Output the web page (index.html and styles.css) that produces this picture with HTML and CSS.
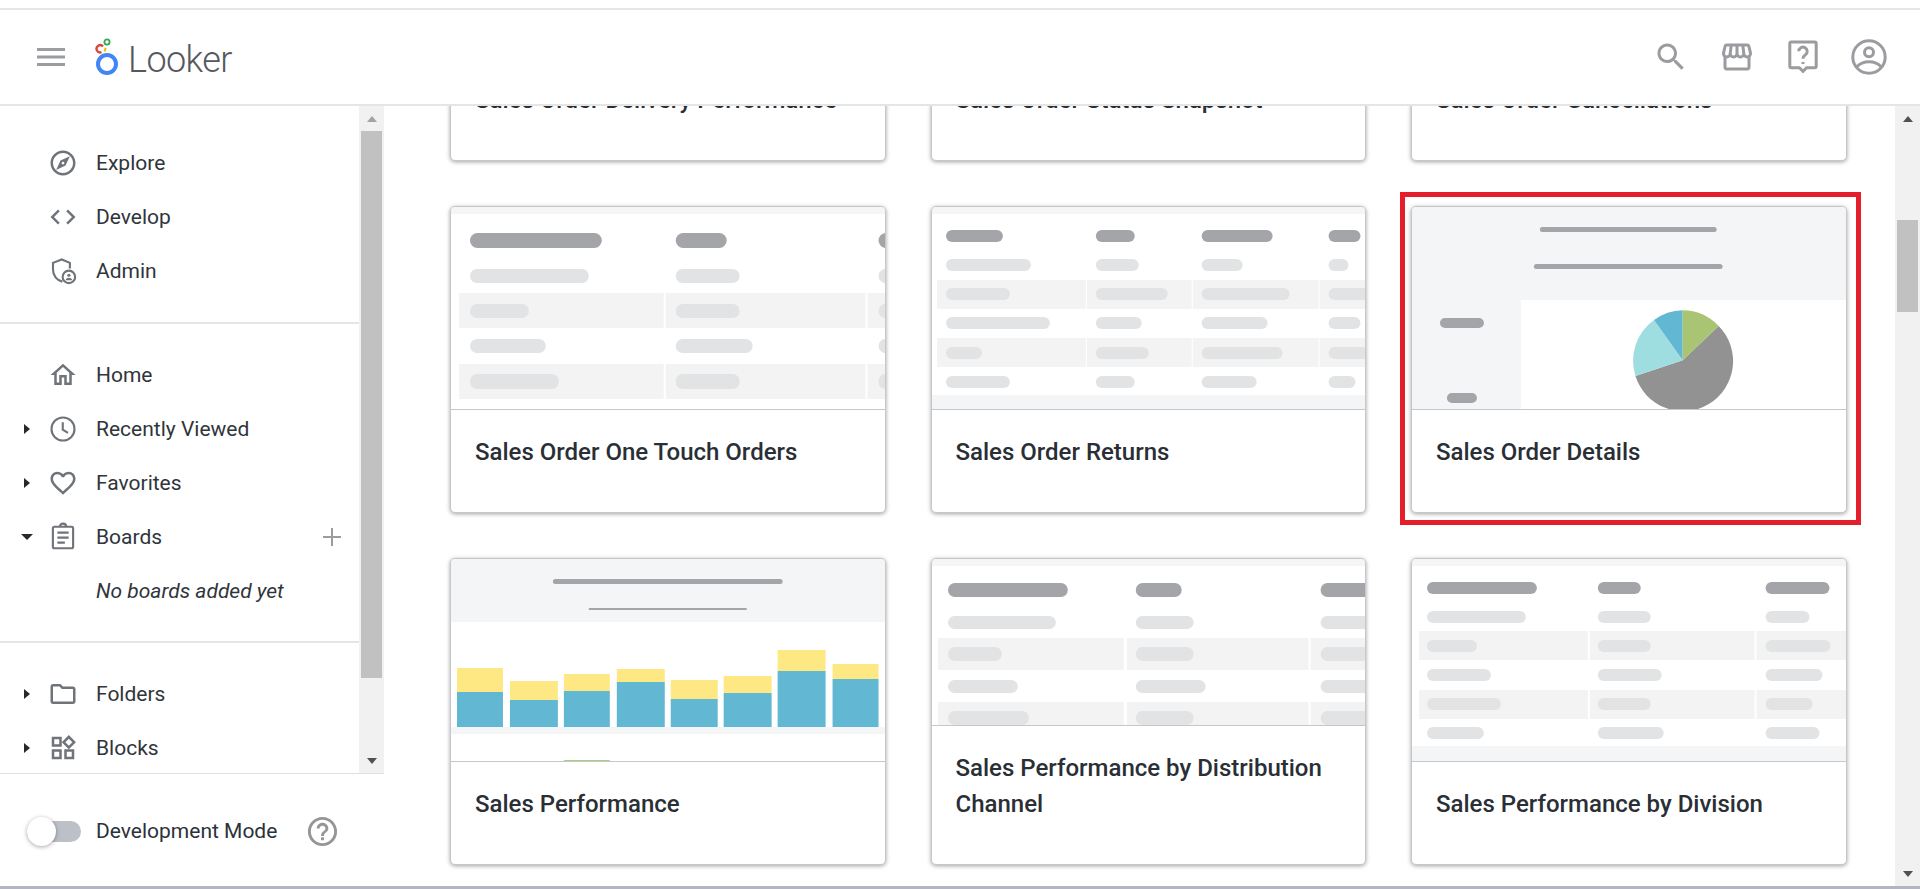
FILE: index.html
```html
<!DOCTYPE html>
<html lang="en">
<head>
<meta charset="utf-8">
<title>Looker</title>
<link rel="stylesheet" href="styles.css">
</head>
<body>
<div class="topstrip"></div>
<header class="header">
  <svg class="burger" viewBox="0 0 28 18"><path d="M0 1.5h28M0 9h28M0 16.5h28"/></svg>
  <div class="logo">
    <svg class="logo-mark" viewBox="0 0 24 38">
      <circle class="lm-blue" cx="12" cy="26" r="9"/>
      <path class="lm-red" d="M8 8.6a3.6 3.6 0 1 0 -1.5 5.6"/>
      <circle class="lm-green" cx="12" cy="4" r="2.6"/>
      <path class="lm-yellow" d="M9.6 13.5l1.1-3.6"/>
    </svg>
    <span class="logo-text">Looker</span>
  </div>
  <div class="header-icons">
    <svg class="hi" viewBox="0 0 24 24"><path d="M15.5 14h-.79l-.28-.27C15.41 12.59 16 11.11 16 9.5 16 5.91 13.09 3 9.5 3S3 5.91 3 9.5 5.91 16 9.5 16c1.61 0 3.09-.59 4.23-1.57l.27.28v.79l5 4.99L20.49 19l-4.99-5zm-6 0C7.01 14 5 11.99 5 9.5S7.01 5 9.5 5 14 7.01 14 9.5 11.99 14 9.5 14z"/></svg>
    <svg class="hi" viewBox="0 0 24 24"><path d="M21.9 8.89l-1.05-4.37c-.22-.9-1-1.52-1.91-1.52H5.05c-.9 0-1.69.63-1.9 1.52L2.1 8.89c-.24 1.02-.02 2.06.62 2.88.08.11.19.19.28.29V19c0 1.1.9 2 2 2h14c1.1 0 2-.9 2-2v-6.94c.09-.09.2-.18.28-.28.64-.82.87-1.87.62-2.89zm-2.99-3.9l1.05 4.37c.1.42.01.84-.25 1.17-.14.18-.44.47-.94.47-.61 0-1.14-.49-1.21-1.14L16.98 5l1.93-.01zM13 5h1.96l.54 4.52c.05.39-.07.78-.33 1.07-.22.26-.54.41-.95.41-.67 0-1.22-.59-1.22-1.31V5zM8.49 9.52L9.04 5H11v4.69c0 .72-.55 1.31-1.29 1.31-.34 0-.65-.15-.89-.41-.25-.29-.37-.68-.33-1.07zm-4.45-.16L5.05 5h1.97l-.58 4.86c-.08.65-.6 1.14-1.21 1.14-.49 0-.8-.29-.93-.47-.27-.32-.36-.75-.26-1.17zM5 19v-6.03c.08.01.15.03.23.03.87 0 1.66-.36 2.24-.95.6.6 1.4.95 2.31.95.87 0 1.65-.36 2.23-.93.59.57 1.39.93 2.29.93.84 0 1.64-.35 2.24-.95.58.59 1.37.95 2.24.95.08 0 .15-.02.23-.03V19H5z"/></svg>
    <svg class="hi hi-stroke" viewBox="0 0 24 24"><path d="M4.2 2h15.6a1 1 0 0 1 1 1v15.2a1 1 0 0 1-1 1h-5.4l-2.4 2.4-2.4-2.4H4.2a1 1 0 0 1-1-1V3a1 1 0 0 1 1-1z"/><path d="M9.2 8.2a2.8 2.8 0 1 1 4.4 2.3c-1 .7-1.6 1.3-1.6 2.6"/><path d="M12 15.3v1.4"/></svg>
    <svg class="hi hi-stroke" viewBox="0 0 24 24"><circle cx="12" cy="12" r="10.8"/><circle cx="12" cy="8.8" r="3"/><path d="M3.8 18.6c1.8-2 4.9-3.4 8.2-3.4s6.4 1.4 8.2 3.4"/></svg>
  </div>
</header>

<div class="app">
  <aside class="sidebar">
    <div class="side-scroll">
      <nav class="nav">
        <div class="nav-group">
          <div class="item"><span class="caret-slot"></span><svg class="ic" viewBox="0 0 24 24"><path d="M12 2C6.48 2 2 6.48 2 12s4.48 10 10 10 10-4.48 10-10S17.52 2 12 2zm0 18c-4.41 0-8-3.59-8-8s3.59-8 8-8 8 3.59 8 8-3.59 8-8 8zm-5.5-2.5l7.51-3.49L17.5 6.5 9.99 9.99 6.5 17.5zm5.5-6.6c.61 0 1.1.49 1.1 1.1s-.49 1.1-1.1 1.1-1.1-.49-1.1-1.1.49-1.1 1.1-1.1z"/></svg><span>Explore</span></div>
          <div class="item"><span class="caret-slot"></span><svg class="ic" viewBox="0 0 24 24"><path d="M9.4 16.6L4.8 12l4.6-4.6L8 6l-6 6 6 6 1.4-1.4zm5.2 0l4.6-4.6-4.6-4.6L16 6l6 6-6 6-1.4-1.4z"/></svg><span>Develop</span></div>
          <div class="item"><span class="caret-slot"></span><svg class="ic ic-stroke" viewBox="0 0 24 24"><path d="M11.5 20.5C7 19.5 4 15.5 4 11V5.5L11 2.8l6.5 2.7v4.5"/><circle cx="16.7" cy="16.7" r="5"/><circle class="ic-dot" cx="16.7" cy="15.4" r="1.3"/><path class="ic-dot" d="M14 19.3c.5-1.3 1.5-1.9 2.7-1.9s2.2.6 2.7 1.9z"/></svg><span>Admin</span></div>
        </div>
        <div class="nav-group">
          <div class="item"><span class="caret-slot"></span><svg class="ic" viewBox="0 0 24 24"><path d="M12 5.69l5 4.5V18h-2v-6H9v6H7v-7.81l5-4.5M12 3L2 12h3v8h6v-6h2v6h6v-8h3L12 3z"/></svg><span>Home</span></div>
          <div class="item"><span class="caret-slot"><i class="caret-r"></i></span><svg class="ic ic-stroke" viewBox="0 0 24 24"><circle cx="12" cy="12" r="9.2"/><path d="M11.8 6.5v6l4.2 2.6"/></svg><span>Recently Viewed</span></div>
          <div class="item"><span class="caret-slot"><i class="caret-r"></i></span><svg class="ic" viewBox="0 0 24 24"><path d="M16.5 3c-1.74 0-3.41.81-4.5 2.09C10.91 3.81 9.24 3 7.5 3 4.42 3 2 5.42 2 8.5c0 3.78 3.4 6.86 8.55 11.54L12 21.35l1.45-1.32C18.6 15.36 22 12.28 22 8.5 22 5.42 19.58 3 16.5 3zm-4.4 15.55l-.1.1-.1-.1C7.14 14.24 4 11.39 4 8.5 4 6.5 5.5 5 7.5 5c1.54 0 3.04.99 3.57 2.36h1.87C13.46 5.99 14.96 5 16.5 5c2 0 3.5 1.5 3.5 3.5 0 2.89-3.14 5.74-7.9 10.05z"/></svg><span>Favorites</span></div>
          <div class="item"><span class="caret-slot"><i class="caret-d"></i></span><svg class="ic ic-stroke" viewBox="0 0 24 24"><rect x="3.9" y="3.8" width="16.2" height="17.2" rx="1.2"/><path d="M9.5 3.8c0-1.5 1-2.5 2.5-2.5s2.5 1 2.5 2.5"/><path d="M7.5 8.5h9M7.5 12.5h9M7.5 16.5h6"/></svg><span>Boards</span><svg class="plus" viewBox="0 0 18 18"><path d="M9 0v18M0 9h18"/></svg></div>
          <div class="item item-empty">No boards added yet</div>
        </div>
        <div class="nav-group nav-group-last">
          <div class="item"><span class="caret-slot"><i class="caret-r"></i></span><svg class="ic" viewBox="0 0 24 24"><path d="M20 6h-8l-2-2H4c-1.1 0-1.99.9-1.99 2L2 18c0 1.1.9 2 2 2h16c1.1 0 2-.9 2-2V8c0-1.1-.9-2-2-2zm0 12H4V6h5.17l2 2H20v10z"/></svg><span>Folders</span></div>
          <div class="item"><span class="caret-slot"><i class="caret-r"></i></span><svg class="ic" viewBox="0 0 24 24"><path d="M16.66 4.52l2.83 2.83-2.83 2.83-2.83-2.83 2.83-2.83M9 5v4H5V5h4m10 10v4h-4v-4h4M9 15v4H5v-4h4m7.66-13.31L11 7.34 16.66 13l5.66-5.66-5.66-5.65zM11 3H3v8h8V3zm10 10h-8v8h8v-8zm-10 0H3v8h8v-8z"/></svg><span>Blocks</span></div>
        </div>
      </nav>
      <div class="sb">
        <span class="sb-btn"><i class="arrow-up arrow-muted"></i></span>
        <div class="sb-thumb sb-thumb-side"></div>
        <span class="sb-btn sb-btn-end"><i class="arrow-down"></i></span>
      </div>
    </div>
    <div class="side-foot">
      <div class="toggle"><span class="knob"></span></div>
      <span class="foot-label">Development Mode</span>
      <svg class="foot-help" viewBox="0 0 24 24"><path d="M11 18h2v-2h-2v2zm1-16C6.48 2 2 6.48 2 12s4.48 10 10 10 10-4.48 10-10S17.52 2 12 2zm0 18c-4.41 0-8-3.59-8-8s3.59-8 8-8 8 3.59 8 8-3.59 8-8 8zm0-14c-2.21 0-4 1.79-4 4h2c0-1.1.9-2 2-2s2 .9 2 2c0 2-3 1.75-3 5h2c0-2.25 3-2.5 3-5 0-2.21-1.79-4-4-4z"/></svg>
    </div>
  </aside>

  <main class="main">
    <div class="grid">
      <article class="card"><div class="thumb"></div><h3 class="title">Sales Order Delivery Performance</h3></article>
      <article class="card"><div class="thumb"></div><h3 class="title">Sales Order Status Snapshot</h3></article>
      <article class="card"><div class="thumb"></div><h3 class="title">Sales Order Cancellations</h3></article>

      <article class="card">
        <div class="thumb">
          <svg class="sk" viewBox="0 1 434 202" preserveAspectRatio="none">
            <rect class="band" x="0" y="0" width="435" height="8"/>
            <rect class="band2" x="8" y="87" width="205" height="35"/><rect class="band2" x="215" y="87" width="200" height="35"/><rect class="band2" x="417" y="87" width="18" height="35"/>
            <rect class="band2" x="8" y="158" width="205" height="35"/><rect class="band2" x="215" y="158" width="200" height="35"/><rect class="band2" x="417" y="158" width="18" height="35"/>
            <rect class="ph" x="19" y="27" width="132" height="15" rx="7.5"/><rect class="ph" x="225" y="27" width="51" height="15" rx="7.5"/><rect class="ph" x="428" y="27" width="50" height="15" rx="7.5"/>
            <rect class="pl" x="19" y="63" width="119" height="14" rx="7"/><rect class="pl" x="225" y="63" width="64" height="14" rx="7"/><rect class="pl" x="428" y="63" width="50" height="14" rx="7"/>
            <rect class="pl" x="19" y="98" width="59" height="14" rx="7"/><rect class="pl" x="225" y="98" width="64" height="14" rx="7"/><rect class="pl" x="428" y="98" width="50" height="14" rx="7"/>
            <rect class="pl" x="19" y="133" width="76" height="14" rx="7"/><rect class="pl" x="225" y="133" width="77" height="14" rx="7"/><rect class="pl" x="428" y="133" width="50" height="14" rx="7"/>
            <rect class="pl" x="19" y="168" width="89" height="15" rx="7"/><rect class="pl" x="225" y="168" width="64" height="15" rx="7"/><rect class="pl" x="428" y="168" width="50" height="15" rx="7"/>
          </svg>
        </div>
        <h3 class="title">Sales Order One Touch Orders</h3>
      </article>

      <article class="card">
        <div class="thumb">
          <svg class="sk" viewBox="0 1 434 202" preserveAspectRatio="none">
            <rect class="band" x="0" y="0" width="435" height="8"/><rect class="band" x="0" y="189" width="435" height="14"/>
            <rect class="band2" x="5" y="74" width="149" height="29"/><rect class="band2" x="155" y="74" width="105" height="29"/><rect class="band2" x="261" y="74" width="126" height="29"/><rect class="band2" x="388" y="74" width="47" height="29"/>
            <rect class="band2" x="5" y="132" width="149" height="29"/><rect class="band2" x="155" y="132" width="105" height="29"/><rect class="band2" x="261" y="132" width="126" height="29"/><rect class="band2" x="388" y="132" width="47" height="29"/>
            <rect class="ph" x="14" y="24" width="57" height="12" rx="6"/><rect class="ph" x="164" y="24" width="39" height="12" rx="6"/><rect class="ph" x="270" y="24" width="71" height="12" rx="6"/><rect class="ph" x="397" y="24" width="32" height="12" rx="6"/>
            <rect class="pl" x="14" y="53" width="85" height="12" rx="6"/><rect class="pl" x="164" y="53" width="43" height="12" rx="6"/><rect class="pl" x="270" y="53" width="41" height="12" rx="6"/><rect class="pl" x="397" y="53" width="20" height="12" rx="6"/>
            <rect class="pl" x="14" y="82" width="64" height="12" rx="6"/><rect class="pl" x="164" y="82" width="72" height="12" rx="6"/><rect class="pl" x="270" y="82" width="88" height="12" rx="6"/><rect class="pl" x="397" y="82" width="60" height="12" rx="6"/>
            <rect class="pl" x="14" y="111" width="104" height="12" rx="6"/><rect class="pl" x="164" y="111" width="46" height="12" rx="6"/><rect class="pl" x="270" y="111" width="66" height="12" rx="6"/><rect class="pl" x="397" y="111" width="32" height="12" rx="6"/>
            <rect class="pl" x="14" y="141" width="36" height="12" rx="6"/><rect class="pl" x="164" y="141" width="53" height="12" rx="6"/><rect class="pl" x="270" y="141" width="81" height="12" rx="6"/><rect class="pl" x="397" y="141" width="60" height="12" rx="6"/>
            <rect class="pl" x="14" y="170" width="64" height="12" rx="6"/><rect class="pl" x="164" y="170" width="39" height="12" rx="6"/><rect class="pl" x="270" y="170" width="55" height="12" rx="6"/><rect class="pl" x="397" y="170" width="27" height="12" rx="6"/>
          </svg>
        </div>
        <h3 class="title">Sales Order Returns</h3>
      </article>

      <article class="card">
        <div class="thumb">
          <svg class="sk" viewBox="0 1 434 202" preserveAspectRatio="none">
            <rect class="band" x="0" y="0" width="435" height="203"/>
            <rect class="ph" x="128" y="21" width="177" height="5" rx="2.5"/>
            <rect class="ph" x="122" y="58" width="189" height="5" rx="2.5"/>
            <rect class="white" x="109" y="94" width="326" height="109"/>
            <rect class="ph" x="28" y="112" width="44" height="10" rx="5"/>
            <rect class="ph" x="35" y="187" width="30" height="10" rx="5"/>
            <path class="pie-gray" d="M271 154.3L307 120A50 50 0 1 1 223.7 170z"/>
            <path class="pie-teal" d="M271 154.3L223.7 170A50 50 0 0 1 242.3 114z"/>
            <path class="pie-blue" d="M271 154.3L242.3 114A50 50 0 0 1 271 104.3z"/>
            <path class="pie-green" d="M271 154.3V104.3A50 50 0 0 1 307 120z"/>
          </svg>
        </div>
        <h3 class="title">Sales Order Details</h3>
        <div class="frame"></div>
      </article>

      <article class="card">
        <div class="thumb">
          <svg class="sk" viewBox="0 1 434 202" preserveAspectRatio="none">
            <rect class="band" x="0" y="0" width="435" height="64"/><rect class="band" x="0" y="169" width="435" height="7"/>
            <rect class="ph" x="102" y="21" width="230" height="5" rx="2.5"/>
            <rect class="ph" x="138" y="50" width="158" height="2"/>
            <rect class="yl" x="6" y="110" width="46" height="24"/><rect class="bl" x="6" y="134" width="46" height="35"/>
            <rect class="yl" x="59" y="123" width="48" height="19"/><rect class="bl" x="59" y="142" width="48" height="27"/>
            <rect class="yl" x="113" y="116" width="46" height="17"/><rect class="bl" x="113" y="133" width="46" height="36"/>
            <rect class="yl" x="166" y="111" width="48" height="13"/><rect class="bl" x="166" y="124" width="48" height="45"/>
            <rect class="yl" x="220" y="122" width="47" height="19"/><rect class="bl" x="220" y="141" width="47" height="28"/>
            <rect class="yl" x="273" y="118" width="48" height="17"/><rect class="bl" x="273" y="135" width="48" height="34"/>
            <rect class="yl" x="327" y="92" width="48" height="21"/><rect class="bl" x="327" y="113" width="48" height="56"/>
            <rect class="yl" x="382" y="106" width="46" height="15"/><rect class="bl" x="382" y="121" width="46" height="48"/>
            <rect class="gr" x="113" y="202" width="46" height="1"/>
          </svg>
        </div>
        <h3 class="title">Sales Performance</h3>
      </article>

      <article class="card">
        <div class="thumb thumb-short">
          <svg class="sk sk-short" viewBox="0 1 434 166" preserveAspectRatio="none">
            <rect class="band" x="0" y="0" width="435" height="8"/>
            <rect class="band2" x="6" y="80" width="186" height="32"/><rect class="band2" x="195" y="80" width="182" height="32"/><rect class="band2" x="379" y="80" width="56" height="32"/>
            <rect class="band2" x="6" y="144" width="186" height="23"/><rect class="band2" x="195" y="144" width="182" height="23"/><rect class="band2" x="379" y="144" width="56" height="23"/>
            <rect class="ph" x="16" y="25" width="120" height="14" rx="7"/><rect class="ph" x="204" y="25" width="46" height="14" rx="7"/><rect class="ph" x="389" y="25" width="70" height="14" rx="7"/>
            <rect class="pl" x="16" y="58" width="108" height="13" rx="6.5"/><rect class="pl" x="204" y="58" width="58" height="13" rx="6.5"/><rect class="pl" x="389" y="58" width="70" height="13" rx="6.5"/>
            <rect class="pl" x="16" y="89" width="54" height="14" rx="7"/><rect class="pl" x="204" y="89" width="58" height="14" rx="7"/><rect class="pl" x="389" y="89" width="70" height="14" rx="7"/>
            <rect class="pl" x="16" y="122" width="70" height="13" rx="6.5"/><rect class="pl" x="204" y="122" width="70" height="13" rx="6.5"/><rect class="pl" x="389" y="122" width="70" height="13" rx="6.5"/>
            <rect class="pl" x="16" y="153" width="81" height="14" rx="7"/><rect class="pl" x="204" y="153" width="58" height="14" rx="7"/><rect class="pl" x="389" y="153" width="70" height="14" rx="7"/>
          </svg>
        </div>
        <h3 class="title">Sales Performance by Distribution Channel</h3>
      </article>

      <article class="card">
        <div class="thumb">
          <svg class="sk" viewBox="0 1 434 202" preserveAspectRatio="none">
            <rect class="band" x="0" y="0" width="435" height="8"/><rect class="band" x="0" y="188" width="435" height="15"/>
            <rect class="band2" x="7" y="73" width="169" height="29"/><rect class="band2" x="178" y="73" width="165" height="29"/><rect class="band2" x="345" y="73" width="90" height="29"/>
            <rect class="band2" x="7" y="132" width="169" height="29"/><rect class="band2" x="178" y="132" width="165" height="29"/><rect class="band2" x="345" y="132" width="90" height="29"/>
            <rect class="ph" x="15" y="24" width="110" height="12" rx="6"/><rect class="ph" x="186" y="24" width="43" height="12" rx="6"/><rect class="ph" x="354" y="24" width="64" height="12" rx="6"/>
            <rect class="pl" x="15" y="53" width="99" height="12" rx="6"/><rect class="pl" x="186" y="53" width="53" height="12" rx="6"/><rect class="pl" x="354" y="53" width="44" height="12" rx="6"/>
            <rect class="pl" x="15" y="82" width="50" height="12" rx="6"/><rect class="pl" x="186" y="82" width="53" height="12" rx="6"/><rect class="pl" x="354" y="82" width="65" height="12" rx="6"/>
            <rect class="pl" x="15" y="111" width="64" height="12" rx="6"/><rect class="pl" x="186" y="111" width="64" height="12" rx="6"/><rect class="pl" x="354" y="111" width="57" height="12" rx="6"/>
            <rect class="pl" x="15" y="140" width="74" height="12" rx="6"/><rect class="pl" x="186" y="140" width="53" height="12" rx="6"/><rect class="pl" x="354" y="140" width="47" height="12" rx="6"/>
            <rect class="pl" x="15" y="169" width="57" height="12" rx="6"/><rect class="pl" x="186" y="169" width="66" height="12" rx="6"/><rect class="pl" x="354" y="169" width="54" height="12" rx="6"/>
          </svg>
        </div>
        <h3 class="title">Sales Performance by Division</h3>
      </article>
    </div>
    <div class="sb sb-main">
      <span class="sb-btn"><i class="arrow-up"></i></span>
      <div class="sb-thumb sb-thumb-main"></div>
      <span class="sb-btn sb-btn-end"><i class="arrow-down"></i></span>
    </div>
  </main>
</div>
<div class="footstrip"></div>
</body>
</html>
```

FILE: styles.css
```css
* { box-sizing: border-box; }
html, body { margin: 0; height: 100%; }
body {
  display: flex;
  flex-direction: column;
  height: 889px;
  overflow: hidden;
  background: #fff;
  color: #2d3238;
  font-family: Roboto, "Liberation Sans", sans-serif;
}
.topstrip { flex: none; height: 10px; border-bottom: 2px solid #e4e5e6; }
.header {
  flex: none;
  height: 96px;
  display: flex;
  align-items: center;
  padding-left: 37px;
  border-bottom: 2px solid #e4e5e6;
}
.burger { width: 28px; height: 18px; fill: none; stroke: #9a9c9f; stroke-width: 3; }
.logo { display: flex; align-items: center; margin-left: 30px; }
.logo-mark { width: 24px; height: 38px; fill: none; margin-top: -1px; }
.lm-blue { stroke: #4285f4; stroke-width: 4; }
.lm-red { stroke: #d9483b; stroke-width: 2.4; }
.lm-green { stroke: #34a853; stroke-width: 1.8; }
.lm-yellow { stroke: #f4b400; stroke-width: 2; }
.logo-text { margin-left: 9px; padding-top: 5px; font-size: 36px; font-weight: 300; color: #55595e; letter-spacing: -.6px; }
.header-icons { margin-left: auto; display: flex; align-items: center; gap: 30px; padding-right: 33px; }
.hi { width: 36px; height: 36px; fill: #9a9c9f; }
.hi-stroke { fill: none; stroke: #9a9c9f; stroke-width: 2; }

.app { flex: 1; min-height: 0; display: flex; }
.footstrip { flex: none; height: 3px; background: #b1b6c0; }

.sidebar { flex: none; width: 384px; display: flex; flex-direction: column; }
.side-scroll { flex: none; height: 667px; display: flex; overflow: hidden; }
.nav { flex: 1; min-width: 0; }
.nav-group { padding: 30px 0 24px; border-bottom: 2px solid #e4e5e6; }
.nav-group + .nav-group { padding: 24px 0 23px; }
.nav-group-last { border-bottom: 0; }
.item { height: 54px; display: flex; align-items: center; font-size: 21px; padding-right: 18px; color: #30353b; }
.caret-slot { flex: none; width: 12px; margin: 0 15px 0 21px; display: flex; justify-content: center; }
.caret-r { width: 0; height: 0; border-style: solid; border-width: 5.5px 0 5.5px 6px; border-color: transparent transparent transparent #25282c; }
.caret-d { width: 0; height: 0; border-style: solid; border-width: 6px 6px 0; border-color: #25282c transparent transparent; }
.ic { flex: none; width: 30px; height: 30px; margin-right: 18px; fill: #6f737a; }
.ic-stroke { fill: none; stroke: #6f737a; stroke-width: 1.7; }
.ic-dot { fill: #6f737a; stroke: none; }
.plus { width: 18px; height: 18px; margin-left: auto; stroke: #9a9c9f; stroke-width: 2; fill: none; }
.item-empty { padding-left: 96px; font-style: italic; }

.sb { flex: none; width: 25px; display: flex; flex-direction: column; background: #f1f1f1; }
.sb-btn { flex: none; height: 25px; display: flex; align-items: center; justify-content: center; }
.sb-btn-end { margin-top: auto; }
.sb-thumb { flex: none; margin: 0 2px; background: #c1c1c1; }
.sb-thumb-side { height: 547px; }
.sb-thumb-main { height: 92px; margin-top: 89px; }
.arrow-up, .arrow-down { width: 0; height: 0; border-style: solid; border-color: transparent; }
.arrow-up { border-width: 0 5.5px 6px; border-bottom-color: #505050; }
.arrow-down { border-width: 6px 5.5px 0; border-top-color: #505050; }
.arrow-muted { border-bottom-color: #a3a3a3; }

.side-foot { flex: 1; display: flex; align-items: center; padding: 2px 0 0 27px; border-top: 1px solid #dfe0e2; }
.toggle { flex: none; position: relative; width: 54px; height: 21px; border-radius: 11px; background: #bcc0c7; }
.knob { position: absolute; left: 0; top: -4px; width: 29px; height: 29px; border-radius: 50%; background: #fff; box-shadow: 0 1px 4px rgba(0,0,0,.35); }
.foot-label { margin-left: 15px; font-size: 21px; color: #2b3238; white-space: nowrap; }
.foot-help { flex: none; width: 35px; height: 35px; margin-left: 28px; fill: #969696; }

.main { flex: 1; min-width: 0; display: flex; overflow: hidden; }
.grid {
  flex: 1;
  min-width: 0;
  align-self: flex-start;
  margin-top: -252px;
  padding-left: 66px;
  display: grid;
  grid-template-columns: repeat(3, 435.5px);
  grid-auto-rows: 307px;
  gap: 45px;
}
.card {
  position: relative;
  display: flex;
  flex-direction: column;
  background: #fff;
  border: 1px solid #c6c7ca;
  border-radius: 5px;
  box-shadow: 0 1px 4px rgba(0,0,0,.36);
}
.thumb { flex: none; overflow: hidden; border-radius: 4px 4px 0 0; height: 202px; }
.thumb-short { height: 166px; }
.sk { display: block; width: 100%; height: 202px; }
.sk-short { height: 166px; }
.title {
  margin: 0;
  flex: 1;
  padding: 24px 24px;
  border-top: 1px solid #c6c7ca;
  font-size: 24px;
  font-weight: 500;
  line-height: 36px;
  color: #2a2f35;
}
.band { fill: #f4f5f7; }
.band2 { fill: #f3f3f3; }
.white { fill: #fff; }
.ph { fill: #a4a5a8; }
.pl { fill: #e2e3e4; }
.yl { fill: #fde884; }
.bl { fill: #62b7d3; }
.gr { fill: #a9d07c; }
.pie-gray { fill: #929292; }
.pie-teal { fill: #9fdee0; }
.pie-blue { fill: #62b7d3; }
.pie-green { fill: #a9c574; }
.frame { position: absolute; left: -12px; right: -15.5px; top: -15px; bottom: -13px; border: 5px solid #e41e2b; pointer-events: none; }
```
